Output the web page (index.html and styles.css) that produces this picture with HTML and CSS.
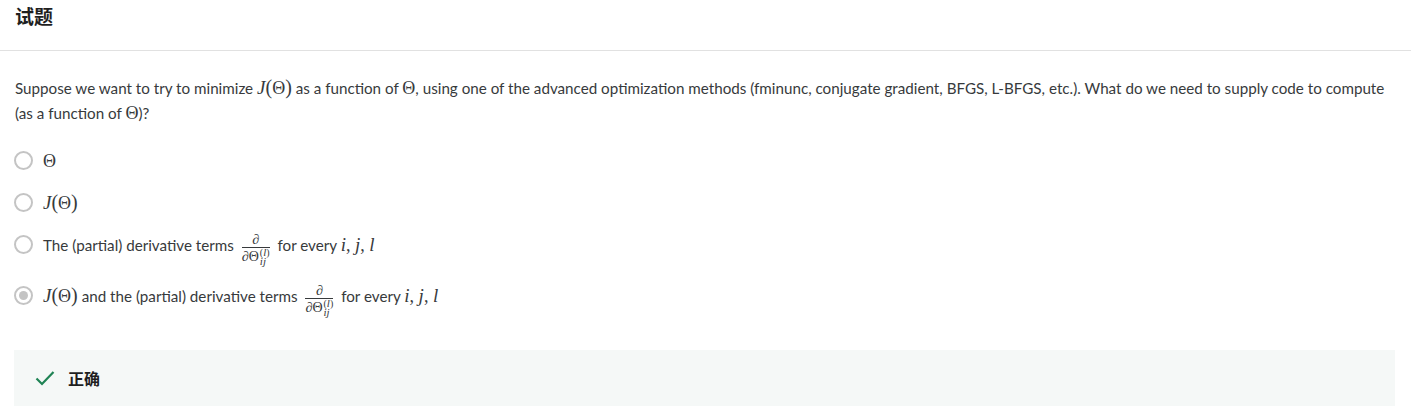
FILE: index.html
```html
<!DOCTYPE html>
<html lang="zh">
<head>
<meta charset="utf-8">
<title>试题</title>
<link rel="stylesheet" href="styles.css">
</head>
<body>
<header class="header"><h2 class="title">试题</h2></header>
<main class="content">
  <p class="question">Suppose we want to try to minimize <span class="m"><i>J</i><span class="p">(</span>Θ<span class="p">)</span></span> as a function of <span class="m">Θ</span>, using one of the advanced optimization methods (fminunc, conjugate gradient, BFGS, L-BFGS, etc.). What do we need to supply code to compute (as a function of <span class="m">Θ</span>)?</p>
  <div class="options">
    <label class="option"><span class="radio"></span><span class="otext"><span class="m">Θ</span></span></label>
    <label class="option"><span class="radio"></span><span class="otext"><span class="m"><i>J</i><span class="p">(</span>Θ<span class="p">)</span></span></span></label>
    <label class="option"><span class="radio"></span><span class="otext">The (partial) derivative terms <span class="frac"><span class="num">∂</span><span class="den">∂Θ<span class="subsup"><span class="sup">(<i>l</i>)</span><span class="sub"><i>ij</i></span></span></span></span> for every <span class="m"><i>i</i>, <i>j</i>, <i>l</i></span></span></label>
    <label class="option"><span class="radio checked"></span><span class="otext"><span class="m"><i>J</i><span class="p">(</span>Θ<span class="p">)</span></span> and the (partial) derivative terms <span class="frac"><span class="num">∂</span><span class="den">∂Θ<span class="subsup"><span class="sup">(<i>l</i>)</span><span class="sub"><i>ij</i></span></span></span></span> for every <span class="m"><i>i</i>, <i>j</i>, <i>l</i></span></span></label>
  </div>
  <div class="feedback">
    <svg class="check" width="20" height="16" viewBox="0 0 20 16"><path d="M1.5 8.5 L7 14 L18.5 2" fill="none" stroke="#1f8354" stroke-width="2.2"/></svg>
    <span class="ftext">正确</span>
  </div>
</main>
</body>
</html>
```
FILE: styles.css
```css
* { box-sizing: border-box; }
body {
  margin: 0;
  font-family: "Lato", "Noto Sans CJK SC", sans-serif;
  color: #373a3c;
  background: #fff;
}
.header {
  height: 51px;
  border-bottom: 1px solid #e1e1e1;
  padding: 4px 15px 0;
}
.title {
  margin: 0;
  font-family: "Noto Sans CJK SC", sans-serif;
  font-size: 19px;
  font-weight: 700;
  line-height: 24px;
  color: #1f1f1f;
}
.content {
  padding: 0 16px 0 14px;
}
.question {
  margin: 25px 0 0 1px;
  font-size: 15.2px;
  line-height: 24.5px;
}
.m {
  font-family: "Liberation Serif", serif;
  font-size: 18px;
  line-height: 1;
}
.m i { font-size: 19px; }
.p { font-size: 20px; }
.options {
  margin-top: 15px;
  display: flex;
  flex-direction: column;
}
.option {
  display: flex;
  align-items: flex-start;
  padding: 8px 0;
  font-size: 15.2px;
  line-height: 26px;
}
.radio {
  width: 19px;
  height: 19px;
  margin-top: 3px;
  border: 2px solid #c4c4c4;
  border-radius: 50%;
  flex: none;
  margin-right: 10px;
  display: flex;
  align-items: center;
  justify-content: center;
}
.radio.checked::after {
  content: "";
  width: 9px;
  height: 9px;
  border-radius: 50%;
  background: #c4c4c4;
}
.otext { display: block; white-space: nowrap; }
.frac {
  display: inline-flex;
  flex-direction: column;
  align-items: center;
  vertical-align: 7px;
  margin: 0 4px 0 4px;
  font-family: "Liberation Serif", serif;
  font-size: 14px;
  line-height: 13px;
}
.num {
  border-bottom: 1px solid #373a3c;
  padding: 0 2px 1px;
  align-self: stretch;
  text-align: center;
  font-style: italic;
}
.den { display: inline-flex; align-items: flex-start; padding-top: 2px; }
.subsup {
  display: inline-flex;
  flex-direction: column;
  margin-left: 1px;
  line-height: 9px;
  margin-top: -2px;
}
.sup, .sub { font-size: 10px; }
.subsup i { font-size: 11px; }
.option:last-child { padding-top: 9px; }
.feedback {
  margin-top: 25px;
  height: 56px;
  background: #f5f8f7;
  display: flex;
  align-items: center;
  padding-left: 21px;
  width: 1381px;
}
.check { margin-right: 13px; }
.ftext {
  font-family: "Noto Sans CJK SC", sans-serif;
  font-size: 16px;
  font-weight: 700;
  color: #1f1f1f;
}
```
